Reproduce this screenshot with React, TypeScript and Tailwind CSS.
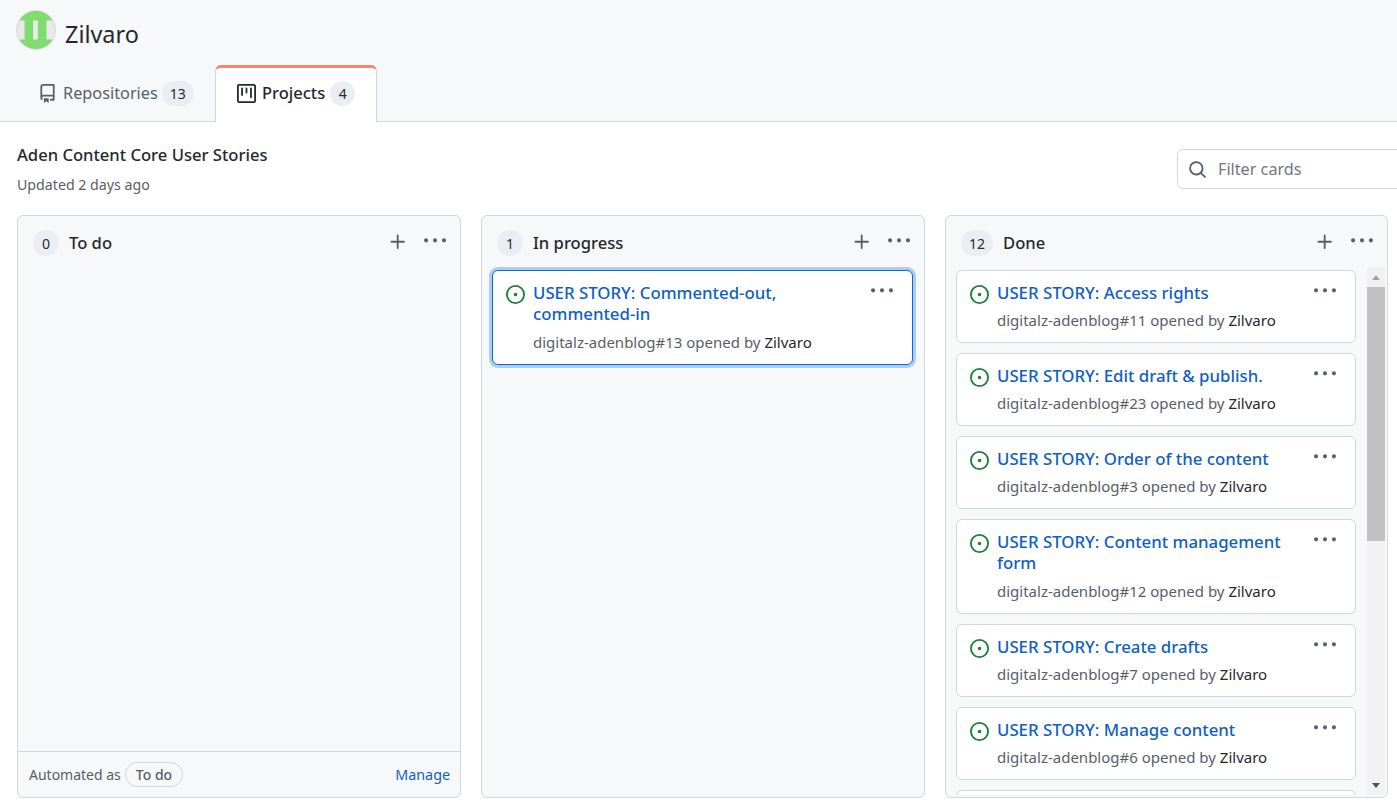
const repoPath = "M2 2.5A2.5 2.5 0 0 1 4.5 0h8.75a.75.75 0 0 1 .75.75v12.5a.75.75 0 0 1-.75.75h-2.5a.75.75 0 0 1 0-1.5h1.75v-2h-8a1 1 0 0 0-.714 1.7.75.75 0 1 1-1.072 1.05A2.495 2.495 0 0 1 2 11.5Zm10.5-1h-8a1 1 0 0 0-1 1v6.708A2.486 2.486 0 0 1 4.5 9h8ZM5 12.25a.25.25 0 0 1 .25-.25h3.5a.25.25 0 0 1 .25.25v3.25a.25.25 0 0 1-.4.2l-1.45-1.087a.249.249 0 0 0-.3 0L5.4 15.7a.25.25 0 0 1-.4-.2Z";
const projectPath = "M1.75 0h12.5C15.216 0 16 .784 16 1.75v12.5A1.75 1.75 0 0 1 14.25 16H1.75A1.75 1.75 0 0 1 0 14.25V1.75C0 .784.784 0 1.75 0ZM1.5 1.75v12.5c0 .138.112.25.25.25h12.5a.25.25 0 0 0 .25-.25V1.75a.25.25 0 0 0-.25-.25H1.75a.25.25 0 0 0-.25.25ZM11.75 3a.75.75 0 0 1 .75.75v7.5a.75.75 0 0 1-1.5 0v-7.5a.75.75 0 0 1 .75-.75Zm-8.25.75a.75.75 0 0 1 1.5 0v5.5a.75.75 0 0 1-1.5 0ZM8 3a.75.75 0 0 1 .75.75v3.5a.75.75 0 0 1-1.5 0v-3.5A.75.75 0 0 1 8 3Z";
const issuePath = "M8 9.5a1.5 1.5 0 1 0 0-3 1.5 1.5 0 0 0 0 3ZM8 0a8 8 0 1 1 0 16A8 8 0 0 1 8 0ZM1.5 8a6.5 6.5 0 1 0 13 0 6.5 6.5 0 0 0-13 0Z";
const kebabPath = "M8 9a1.5 1.5 0 1 0 0-3 1.5 1.5 0 0 0 0 3ZM1.5 9a1.5 1.5 0 1 0 0-3 1.5 1.5 0 0 0 0 3Zm13 0a1.5 1.5 0 1 0 0-3 1.5 1.5 0 0 0 0 3Z";
const plusPath = "M7.75 2a.75.75 0 0 1 .75.75V7h4.25a.75.75 0 0 1 0 1.5H8.5v4.25a.75.75 0 0 1-1.5 0V8.5H2.75a.75.75 0 0 1 0-1.5H7V2.75A.75.75 0 0 1 7.75 2Z";
const searchPath = "M10.68 11.74a6 6 0 0 1-7.922-8.982 6 6 0 0 1 8.982 7.922l3.04 3.04a.749.749 0 0 1-.326 1.275.749.749 0 0 1-.734-.215ZM11.5 7a4.499 4.499 0 1 0-8.997 0A4.499 4.499 0 0 0 11.5 7Z";

function Icon({ d, className }: { d: string; className: string }) {
  return (
    <svg viewBox="0 0 16 16" fill="currentColor" className={className}>
      <path d={d} />
    </svg>
  );
}

function Avatar() {
  return (
    <div className="w-10 h-10 rounded-full border border-[#d8dadd] bg-[#e9e9e9] overflow-hidden shrink-0">
      <svg viewBox="0 0 40 40" className="w-full h-full">
        <rect x="0" y="0" width="40" height="10" fill="#7fdc6f" />
        <rect x="0" y="30" width="40" height="10" fill="#7fdc6f" />
        <rect x="8" y="5" width="9" height="30" fill="#7fdc6f" />
        <rect x="22" y="5" width="9" height="30" fill="#7fdc6f" />
      </svg>
    </div>
  );
}

function IssueCard({ title, meta, focused, wrapped }: { title: string; meta: string; focused?: boolean; wrapped?: boolean }) {
  return (
    <div
      className={
        focused
          ? "shrink-0 bg-white rounded-md border border-[#0969da] shadow-[0_0_0_3px_rgba(9,105,218,0.3)] pl-[13px] pr-[19px] pt-[11px] pb-[11px] flex"
          : "shrink-0 bg-white rounded-md border border-[#d0d7de] pl-[13px] pr-[19px] pt-[11px] pb-[11px] flex"
      }
    >
      <Icon d={issuePath} className="w-[19px] h-[19px] mt-[3px] text-[#1a7f37] shrink-0" />
      <div className="ml-2 flex-1 min-w-0">
        <div className="text-[16.8px] leading-[21px] font-medium text-[#0f5fc4]">{title}</div>
        <div className={wrapped ? "mt-[8px] text-[15px] leading-[21px] text-[#57606a]" : "mt-[7px] text-[15px] leading-[21px] text-[#57606a]"}>
          {meta} opened by <span className="text-[#24292f]">Zilvaro</span>
        </div>
      </div>
      <Icon d={kebabPath} className="w-[22px] h-[22px] -mt-[2px] ml-2 text-[#57606a] shrink-0" />
    </div>
  );
}

function ColumnHeader({ count, name }: { count: number; name: string }) {
  return (
    <div className="h-[54px] shrink-0 flex items-center pl-[15px] pr-[14px]">
      <span className="h-[26px] min-w-[26px] px-[8px] rounded-full bg-[#eaeef2] text-[14px] text-[#24292f] flex items-center justify-center">
        {count}
      </span>
      <span className="ml-[10px] text-[16.6px] font-medium text-[#24292f] flex-1">{name}</span>
      <Icon d={plusPath} className="w-[20px] h-[20px] text-[#57606a] -mt-[2px]" />
      <Icon d={kebabPath} className="w-[22px] h-[22px] ml-[16px] text-[#57606a] -mt-[4px]" />
    </div>
  );
}

const doneCards = [
  { title: "USER STORY: Access rights", meta: "digitalz-adenblog#11" },
  { title: "USER STORY: Edit draft & publish.", meta: "digitalz-adenblog#23" },
  { title: "USER STORY: Order of the content", meta: "digitalz-adenblog#3" },
  { title: "USER STORY: Content management form", meta: "digitalz-adenblog#12", wrapped: true },
  { title: "USER STORY: Create drafts", meta: "digitalz-adenblog#7" },
  { title: "USER STORY: Manage content", meta: "digitalz-adenblog#6" },
];

export default function App() {
  return (
    <div
      className="h-[809px] overflow-hidden bg-white text-[#24292f]"
      style={{ fontFamily: '"Noto Sans", "Open Sans", sans-serif' }}
    >
      {/* Header */}
      <header className="h-[122px] bg-[#f6f8fa] border-b border-[#d0d7de] flex flex-col">
        <div className="flex items-start pl-4 pt-[10px] h-[54px]">
          <Avatar />
          <span className="ml-[9px] mt-1 text-[23.4px] leading-10 text-[#24292f]">Zilvaro</span>
        </div>
        <nav className="flex items-end mt-[11px] h-[57px] pl-[24px]">
          <div className="h-[56px] w-[191px] flex items-center pl-[14px] text-[#57606a]">
            <Icon d={repoPath} className="w-[19px] h-[19px] text-[#57606a]" />
            <span className="ml-[6px] text-[16.3px]">Repositories</span>
            <span className="ml-[4px] h-[25px] px-[8px] rounded-full bg-[#eaeef2] text-[14px] text-[#24292f] flex items-center">13</span>
          </div>
          <div className="h-[57px] w-[162px] -mb-px bg-white border-x border-[#d0d7de] border-t-[3px] border-t-[#f9826c] rounded-t-md flex items-center pl-[21px] pb-[3px]">
            <Icon d={projectPath} className="w-[19px] h-[19px] text-[#24292f]" />
            <span className="ml-[6px] text-[16.5px] font-medium">Projects</span>
            <span className="ml-[5px] h-[25px] w-[25px] rounded-full bg-[#eaeef2] text-[14px] flex items-center justify-center">4</span>
          </div>
        </nav>
      </header>

      {/* Board title */}
      <div className="h-[93px] flex items-start pl-[17px] pr-[17px]">
        <div className="flex-1 pt-[21px]">
          <h1 className="text-[16.6px] leading-[24px] font-medium">Aden Content Core User Stories</h1>
          <p className="mt-[8px] text-[14.2px] leading-[20px] text-[#57606a]">Updated 2 days ago</p>
        </div>
        <div className="mt-[27px] w-[240px] -mr-[37px] h-[40px] shrink-0 rounded-md border border-[#d0d7de] bg-white flex items-center pl-[10px]">
          <Icon d={searchPath} className="w-[19px] h-[19px] text-[#57606a]" />
          <span className="ml-[11px] text-[16.2px] text-[#6e7781]">Filter cards</span>
        </div>
      </div>

      {/* Columns */}
      <div className="flex gap-[20px] pl-[17px] pr-[9px] h-[583px]">
        <section className="w-[444px] shrink-0 rounded-md border border-[#d0d7de] bg-[#f6f8fa] flex flex-col">
          <ColumnHeader count={0} name="To do" />
          <div className="flex-1" />
          <div className="h-[46px] border-t border-[#d0d7de] flex items-center pl-[11px] pr-[10px]">
            <span className="text-[14px] text-[#57606a]">Automated as</span>
            <span className="ml-1 h-[25px] px-[10px] rounded-full border border-[#d0d7de] text-[14px] font-medium text-[#57606a] flex items-center">To do</span>
            <span className="ml-auto text-[14.3px] text-[#0f5fc4]">Manage</span>
          </div>
        </section>

        <section className="w-[444px] shrink-0 rounded-md border border-[#d0d7de] bg-[#f6f8fa] flex flex-col">
          <ColumnHeader count={1} name="In progress" />
          <div className="pl-[10px] pr-[11px]">
            <IssueCard title="USER STORY: Commented-out, commented-in" meta="digitalz-adenblog#13" focused wrapped />
          </div>
        </section>

        <section className="flex-1 min-w-0 rounded-md border border-[#d0d7de] bg-[#f6f8fa] flex flex-col overflow-hidden">
          <ColumnHeader count={12} name="Done" />
          <div className="flex-1 min-h-0 flex pl-[10px] pr-[2px] pb-[2px]">
            <div className="flex-1 min-w-0 flex flex-col gap-[10px] overflow-hidden">
              {doneCards.map((c) => (
                <IssueCard key={c.meta} title={c.title} meta={c.meta} wrapped={c.wrapped} />
              ))}
              {/* next card, only its top edge is in view */}
              <div className="h-[73px] shrink-0 bg-white rounded-md border border-[#d0d7de]" />
            </div>
            {/* Scrollbar */}
            <div className="w-[18px] ml-[11px] -mt-[3px] bg-[#f1f1f1] flex flex-col items-center shrink-0">
              <div className="h-[20px] flex items-center justify-center">
                <div className="w-0 h-0 border-x-[4px] border-x-transparent border-b-[5px] border-b-[#a3a3a3]" />
              </div>
              <div className="w-full h-[254px] bg-[#c1c1c1]" />
              <div className="flex-1" />
              <div className="h-[20px] flex items-center justify-center">
                <div className="w-0 h-0 border-x-[4px] border-x-transparent border-t-[5px] border-t-[#505050]" />
              </div>
            </div>
          </div>
        </section>
      </div>
    </div>
  );
}
